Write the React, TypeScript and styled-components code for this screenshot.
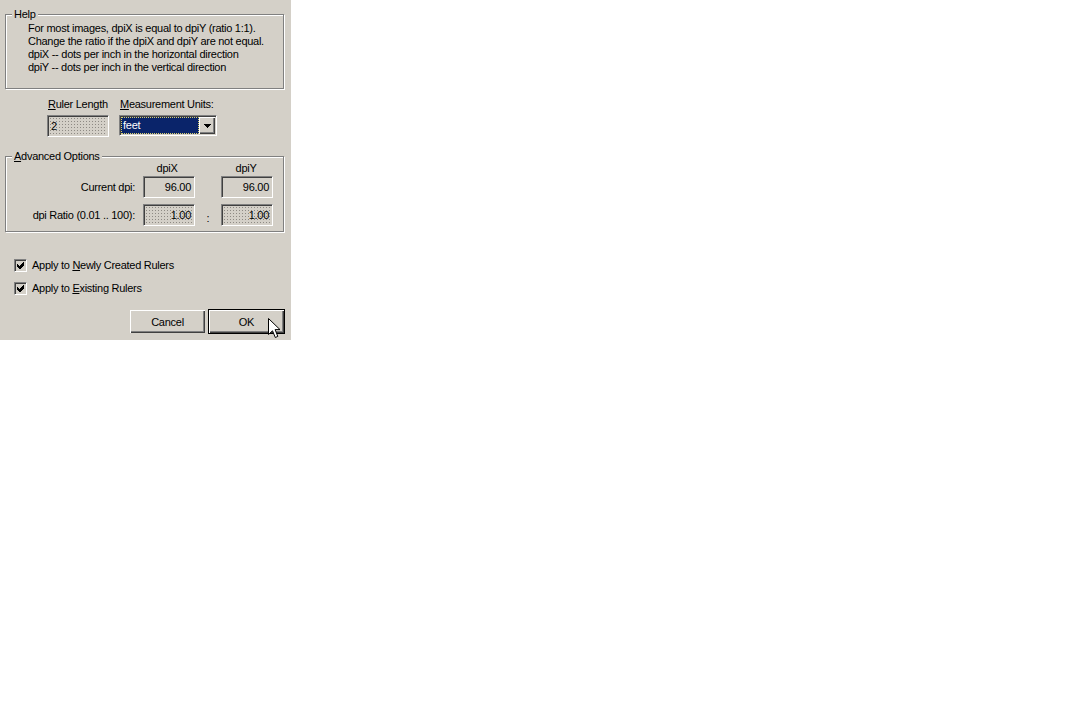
import styled, { createGlobalStyle, css } from "styled-components";

const GlobalStyle = createGlobalStyle`
  html, body {
    margin: 0;
    padding: 0;
    background: #fff;
  }
  body {
    font-family: "Liberation Sans", Arial, sans-serif;
  }
`;

const Dialog = styled.div`
  position: relative;
  width: 291px;
  height: 340px;
  box-sizing: border-box;
  padding: 8px 0 0 5px;
  background: #d4d0c8;
  font-family: "Liberation Sans", Arial, sans-serif;
  font-size: 11px;
  letter-spacing: -0.27px;
  line-height: 13px;
  color: #000;
  white-space: nowrap;
  display: flex;
  flex-direction: column;
  align-items: flex-start;
`;

const Group = styled.fieldset<{ $mt?: number }>`
  width: 279px;
  min-inline-size: 0;
  box-sizing: border-box;
  margin: ${(p) => p.$mt ?? 0}px 0 0 0;
  padding: 0;
  border: 1px solid #808080;
  box-shadow: inset 1px 1px 0 #fff, 1px 1px 0 #fff;
`;

const Legend = styled.legend`
  margin-left: 6px;
  padding: 0 2px;
  line-height: 13px;
  background: #d4d0c8;
`;

const HelpText = styled.div`
  padding: 1px 6px 14px 22px;
`;

const FieldRow = styled.div`
  display: flex;
  gap: 10px;
  margin: 9px 0 0 42px;
`;

const Field = styled.div<{ $w: number }>`
  width: ${(p) => p.$w}px;
  display: flex;
  flex-direction: column;
  gap: 4px;
`;

const FieldLabel = styled.span`
  padding-left: 1px;
`;

const sunken = css`
  box-sizing: border-box;
  border: 1px solid;
  border-color: #808080 #fff #fff #808080;
  box-shadow: inset 1px 1px 0 #404040, inset -1px -1px 0 #d4d0c8;
`;

const raised = css`
  box-sizing: border-box;
  border: none;
  box-shadow: inset 1px 1px 0 #fff, inset -1px -1px 0 #404040,
    inset -2px -2px 0 #808080;
`;

const TextBox = styled.div<{ $w: number; $disabled?: boolean; $right?: boolean }>`
  ${sunken};
  width: ${(p) => p.$w}px;
  height: 22px;
  padding: 0 3px 0 3px;
  display: flex;
  align-items: center;
  justify-content: ${(p) => (p.$right ? "flex-end" : "flex-start")};
  background-color: #d4d0c8;
  ${(p) =>
    p.$disabled &&
    css`
      background-image: radial-gradient(circle, #8e8a84 0.55px, transparent 0.8px);
      background-size: 3px 3px;
      background-position: 1px 1px;
    `}
`;

const Select = styled.div`
  ${sunken};
  width: 98px;
  height: 21px;
  padding: 1px;
  display: flex;
  background: #fff;
`;

const SelectValue = styled.div`
  flex: 1;
  background: #0a246a;
  color: #fff;
  padding-left: 2px;
  line-height: 17px;
  outline: 1px dotted #d8d070;
  outline-offset: -1px;
`;

const DropButton = styled.div`
  ${raised};
  width: 16px;
  background: #d4d0c8;
  display: flex;
  align-items: center;
  justify-content: center;
`;

const AdvGrid = styled.div`
  display: grid;
  grid-template-columns: 137px 52px 26px 52px;
  grid-template-rows: 14px 28px 22px;
  align-items: start;
  padding: 0 0 5px 0;
  margin-top: -1px;
`;

const ColHead = styled.div<{ $shift?: number }>`
  text-align: center;
  margin-left: ${(p) => p.$shift ?? 0}px;
`;

const RowLabel = styled.div`
  height: 22px;
  display: flex;
  align-items: center;
  justify-content: flex-end;
  padding-right: 8px;
`;

const Colon = styled.div`
  height: 22px;
  display: flex;
  align-items: center;
  justify-content: center;
  padding-top: 6px;
  box-sizing: border-box;
`;

const CheckRow = styled.label<{ $mt: number }>`
  display: flex;
  align-items: center;
  gap: 5px;
  margin: ${(p) => p.$mt}px 0 0 9px;
`;

const CheckBox = styled.span`
  ${sunken};
  width: 13px;
  height: 13px;
  background: #d4d0c8;
  display: flex;
  align-items: center;
  justify-content: center;
`;

const ButtonRow = styled.div`
  align-self: stretch;
  display: flex;
  align-items: center;
  justify-content: flex-end;
  gap: 3px;
  padding-right: 6px;
  margin-top: 14px;
`;

const Button = styled.button<{ $default?: boolean }>`
  ${raised};
  width: 75px;
  height: 23px;
  padding: 0;
  background: #d4d0c8;
  font-family: "Liberation Sans", Arial, sans-serif;
  font-size: 11px;
  letter-spacing: -0.27px;
  color: #000;
  ${(p) =>
    p.$default &&
    css`
      width: 77px;
      height: 25px;
      border: 1px solid #000;
    `}
`;

const Cursor = styled.svg`
  position: absolute;
  left: 268px;
  top: 318px;
`;

function Check() {
  return (
    <svg width="7" height="7" viewBox="0 0 7 7" shapeRendering="crispEdges">
      <polygon points="0,2 2,4 6,0 7,0 7,3 3,7 2,7 0,5" fill="#000" />
    </svg>
  );
}

export default function App() {
  return (
    <>
      <GlobalStyle />
      <Dialog>
        <Group>
          <Legend>Help</Legend>
          <HelpText>
            <div>For most images, dpiX is equal to dpiY (ratio 1:1).</div>
            <div>Change the ratio if the dpiX and dpiY are not equal.</div>
            <div>dpiX -- dots per inch in the horizontal direction</div>
            <div>dpiY -- dots per inch in the vertical direction</div>
          </HelpText>
        </Group>

        <FieldRow>
          <Field $w={62}>
            <FieldLabel>
              <u>R</u>uler Length
            </FieldLabel>
            <TextBox $w={62} $disabled>
              2
            </TextBox>
          </Field>
          <Field $w={98}>
            <FieldLabel>
              <u>M</u>easurement Units:
            </FieldLabel>
            <Select>
              <SelectValue>feet</SelectValue>
              <DropButton>
                <svg width="7" height="4" viewBox="0 0 7 4" shapeRendering="crispEdges">
                  <polygon points="0,0 7,0 3.5,4" fill="#000" />
                </svg>
              </DropButton>
            </Select>
          </Field>
        </FieldRow>

        <Group $mt={13}>
          <Legend>
            <u>A</u>dvanced Options
          </Legend>
          <AdvGrid>
            <span />
            <ColHead $shift={-4}>dpiX</ColHead>
            <span />
            <ColHead $shift={-2}>dpiY</ColHead>

            <RowLabel>Current dpi:</RowLabel>
            <TextBox $w={52} $right>
              96.00
            </TextBox>
            <span />
            <TextBox $w={52} $right>
              96.00
            </TextBox>

            <RowLabel>dpi Ratio (0.01 .. 100):</RowLabel>
            <TextBox $w={52} $right $disabled>
              1.00
            </TextBox>
            <Colon>:</Colon>
            <TextBox $w={52} $right $disabled>
              1.00
            </TextBox>
          </AdvGrid>
        </Group>

        <CheckRow $mt={27}>
          <CheckBox>
            <Check />
          </CheckBox>
          <span>
            Apply to <u>N</u>ewly Created Rulers
          </span>
        </CheckRow>
        <CheckRow $mt={10}>
          <CheckBox>
            <Check />
          </CheckBox>
          <span>
            Apply to <u>E</u>xisting Rulers
          </span>
        </CheckRow>

        <ButtonRow>
          <Button>Cancel</Button>
          <Button $default>OK</Button>
        </ButtonRow>

        <Cursor width="13" height="21" viewBox="0 0 13 21">
          <path
            d="M0.5 0.5 L0.5 16.5 L4.5 12.8 L7.3 19.5 L9.8 18.4 L7.1 11.6 L12 11.6 Z"
            fill="#fff"
            stroke="#000"
            strokeWidth="1"
            strokeLinejoin="miter"
          />
        </Cursor>
      </Dialog>
    </>
  );
}
